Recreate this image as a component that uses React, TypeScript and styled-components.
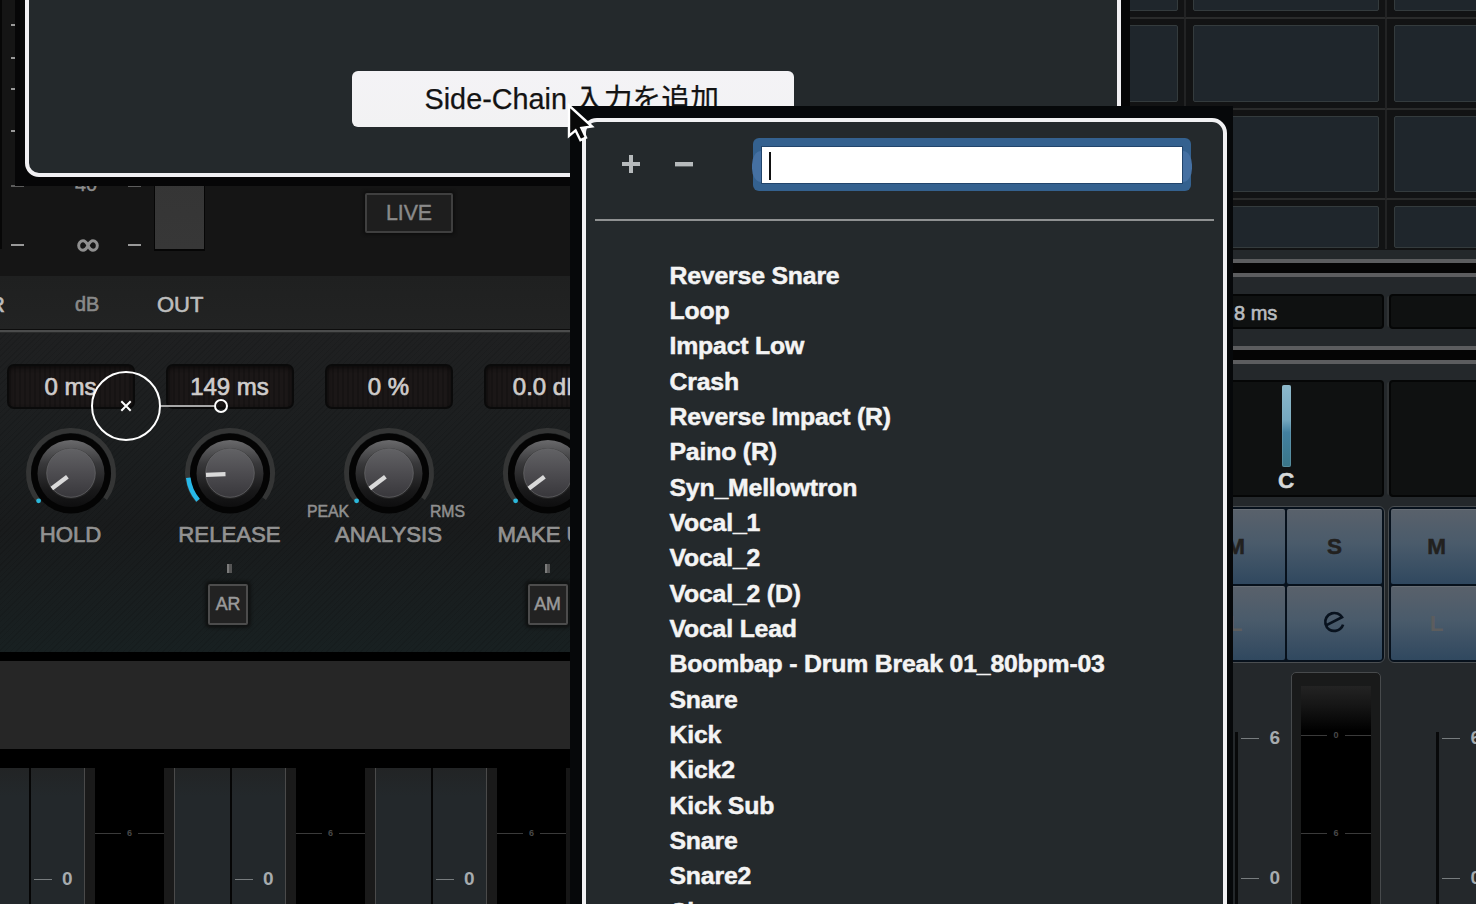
import React from "react";
import styled, { createGlobalStyle } from "styled-components";

const Global = createGlobalStyle`
  * { box-sizing: border-box; }
  html, body { margin: 0; padding: 0; background: #000; }
  body { font-family: "Liberation Sans", "Noto Sans CJK JP", sans-serif; overflow: hidden; }
`;

const Desktop = styled.div`
  position: relative;
  display: grid;
  grid-template-columns: 983px 493px;
  width: 1476px;
  height: 904px;
  overflow: hidden;
  background: #000;
`;

/* ---------- plug-in rack ---------- */

const Rack = styled.section`
  display: flex;
  flex-direction: column;
  height: 904px;
  min-width: 0;
  overflow: hidden;
  background: #000;
`;

const MeterArea = styled.div`
  display: flex;
  align-items: flex-start;
  height: 276px;
  background: #151515;
  flex: none;
`;

const MeterEdge = styled.div`
  width: 2px;
  height: 249px;
  margin-right: 9px;
  background: #070707;
`;

const TickColumn = styled.div<{ $w: number; $pull?: number }>`
  width: ${(p) => p.$w}px;
  margin-left: ${(p) => p.$pull ?? 0}px;
  flex: none;
`;

const Tick = styled.div<{ $gap: number; $w?: number; $dim?: boolean }>`
  width: ${(p) => p.$w ?? 13}px;
  height: 2px;
  margin-top: ${(p) => p.$gap}px;
  background: ${(p) => (p.$dim ? "#5c5c5c" : "#999")};
`;

const ScaleText = styled.div`
  width: 68px;
  padding-top: 174px;
  margin-left: 17px;
  text-align: left;
  color: #8c8c8c;
  font-size: 20px;
  line-height: 20px;
  -webkit-text-stroke: 0.4px currentColor;
`;

const InfinityMark = styled.svg`
  display: block;
  width: 22px;
  height: 13px;
  margin: 45px 0 0 2px;
  fill: none;
  stroke: #8f8f8f;
  stroke-width: 3;
`;

const OutMeter = styled.div`
  width: 51px;
  height: 251px;
  margin-left: 26px;
  border: 1px solid #060606;
  border-top: 0;
  border-bottom-width: 2px;
  background: linear-gradient(#303030, #373737);
`;

const LiveButton = styled.div`
  display: flex;
  align-items: center;
  justify-content: center;
  width: 88px;
  height: 40px;
  margin: 193px 0 0 160px;
  border: 2px solid #3f3f3f;
  border-radius: 2px;
  background: #1e1e1e;
  box-shadow: 0 0 3px 2px #0f0f0f;
  color: #8a8a8a;
  font-size: 21.3px;
  -webkit-text-stroke: 0.4px currentColor;
`;

const CaptionBar = styled.div`
  display: flex;
  align-items: center;
  height: 54px;
  padding-top: 4px;
  flex: none;
  background: linear-gradient(#1f2020, #222323);
  border-bottom: 1px solid #0d0d0d;
`;

const Caption = styled.span<{ $w: number; $color: string; $size: number; $pull?: number }>`
  width: ${(p) => p.$w}px;
  margin-left: ${(p) => p.$pull ?? 0}px;
  color: ${(p) => p.$color};
  font-size: ${(p) => p.$size}px;
  -webkit-text-stroke: 0.6px currentColor;
`;

const Groove = styled.div`
  height: 3px;
  flex: none;
  background: #4b4c4c;
  border-bottom: 1px solid #2a2b2b;
`;

const KnobPanel = styled.div`
  display: flex;
  height: 319px;
  padding: 31px 0 0 7px;
  flex: none;
  background:
    repeating-linear-gradient(135deg, rgba(0, 0, 0, 0.1) 0 1px, transparent 1px 4px),
    linear-gradient(#1f2021, #1b1e1f 40%, #191b1c 60%, #182021 99%);
`;

const KnobUnit = styled.div`
  display: flex;
  flex-direction: column;
  align-items: center;
  width: 127px;
  margin-right: 32px;
  flex: none;
`;

const Readout = styled.div`
  display: flex;
  align-items: center;
  justify-content: center;
  width: 128px;
  height: 45px;
  padding-top: 1px;
  flex: none;
  border: 2px solid #0a0a0a;
  border-radius: 7px;
  background:
    repeating-linear-gradient(90deg, rgba(0, 0, 0, 0.18) 0 2px, transparent 2px 5px),
    #1b1717;
  box-shadow: inset 0 2px 4px #0c0a0a;
  color: #cfcccb;
  font-size: 24px;
  white-space: nowrap;
  -webkit-text-stroke: 0.7px currentColor;
`;

const KnobArt = styled.svg`
  display: block;
  width: 100px;
  height: 100px;
  margin-top: 14px;
  flex: none;
`;

const RangeRow = styled.div`
  display: flex;
  justify-content: space-between;
  width: 158px;
  height: 18px;
  margin: -20px 5px 0 0;
  color: #8f8f8f;
  font-size: 15.8px;
  line-height: 18px;
  -webkit-text-stroke: 0.5px currentColor;
`;

const KnobName = styled.div`
  margin-top: 2px;
  height: 25px;
  color: #929292;
  font-size: 22.2px;
  line-height: 24px;
  white-space: nowrap;
  -webkit-text-stroke: 0.7px currentColor;
`;

const Pip = styled.div`
  width: 5px;
  height: 9px;
  margin-top: 16px;
  background: linear-gradient(90deg, #7b7b7b 40%, #555 40%);
`;

const AutoButton = styled.div<{ $nudge: number }>`
  display: flex;
  align-items: center;
  justify-content: center;
  width: 40px;
  height: 41px;
  margin: 11px ${(p) => p.$nudge}px 0 0;
  border: 2px solid #4c4c4c;
  border-radius: 2px;
  background: #222;
  box-shadow: 0 0 3px 3px #101212;
  color: #9a9a9a;
  font-size: 17.8px;
  -webkit-text-stroke: 0.5px currentColor;
`;

const GreyBand = styled.div`
  height: 88px;
  margin: 9px 0 19px;
  flex: none;
  background: #262626;
`;

const LowerStrips = styled.div`
  display: flex;
  height: 136px;
  margin-left: -37px;
  flex: none;
`;

const FaderStrip = styled.div`
  display: grid;
  grid-template-columns: 11px 55px 55px 11px 69px;
  width: 201px;
  flex: none;
`;

const Rail = styled.div<{ $side: "left" | "right" }>`
  background: #1a1a1a;
  border-${(p) => (p.$side === "left" ? "right" : "left")}: 1px solid #4a4a4a;
`;

const RailEnd = styled.div`
  width: 10px;
  background: #161616;
`;

const Plate = styled.div<{ $slot?: boolean }>`
  background: linear-gradient(#222425, #23282b 28px);
  border-left: ${(p) => (p.$slot ? "2px solid #050505" : "0")};
`;

const ScaleMark = styled.div<{ $top: number; $pad: number }>`
  display: flex;
  align-items: center;
  height: 22px;
  margin-top: ${(p) => p.$top}px;
  padding-left: ${(p) => p.$pad}px;
  gap: 10.5px;
  color: #a6abae;
  font-size: 19px;
  font-weight: bold;
  &::before {
    content: "";
    width: 18px;
    height: 1.5px;
    margin-top: 1px;
    background: #777c7e;
  }
`;

const MeterLine = styled.div<{ $top: number }>`
  display: flex;
  align-items: center;
  justify-content: space-between;
  height: 12px;
  margin-top: ${(p) => p.$top}px;
  color: #484848;
  font-size: 9px;
  font-weight: bold;
  &::before,
  &::after {
    content: "";
    width: 26px;
    height: 1.5px;
    margin-top: 1px;
    background: #3a3a3a;
  }
`;

/* ---------- mixer ---------- */

const Mixer = styled.section`
  display: flex;
  flex-direction: column;
  height: 904px;
  overflow: hidden;
  background: #24282b;
`;

const SlotGrid = styled.div`
  display: grid;
  grid-template-columns: repeat(3, 201px);
  grid-template-rows: 19px 90.5px 90.5px 49px;
  height: 250px;
  flex: none;
  background: #121314;
`;

const SlotCell = styled.div<{ $last?: boolean }>`
  display: flex;
  padding: 6px 6px 6px 7px;
  ${(p) => p.$last && "padding-bottom: 1px;"}
  border-left: 2px solid #222324;
  border-bottom: ${(p) => (p.$last ? "0" : "2px solid #2a2b2b")};
`;

const SlotPlate = styled.div<{ $first?: boolean }>`
  flex: 1;
  margin-top: ${(p) => (p.$first ? "-20px" : "0")};
  border: 1px solid #343b3d;
  border-radius: 2px;
  background: #1f262c;
`;

const Divider = styled.div<{ $gap: number }>`
  height: 18px;
  margin-top: ${(p) => p.$gap}px;
  flex: none;
  border: solid #5c5d5f;
  border-width: 4.5px 0;
  background: #050505;
`;

const StripRow = styled.div<{ $h: number; $gap: number }>`
  display: flex;
  height: ${(p) => p.$h}px;
  margin-top: ${(p) => p.$gap}px;
  flex: none;
`;

const Well = styled.div`
  width: 196px;
  margin: 0 1px 0 4px;
  flex: none;
  border: 2px solid #050606;
  border-radius: 4px;
  background: #0f1111;
  box-shadow: -4px 0 0 -2px #303335;
`;

const LatencyText = styled.div`
  padding: 6px 0 0 44px;
  color: #b9bdc0;
  font-size: 20px;
  line-height: 23px;
  -webkit-text-stroke: 0.6px currentColor;
`;

const PanBlock = styled.div`
  display: flex;
  flex-direction: column;
  align-items: center;
  padding-top: 3px;
  color: #d5d8d9;
  font-size: 22.5px;
  font-weight: bold;
  line-height: 24px;
  -webkit-text-stroke: 0.5px currentColor;
  &::before {
    content: "";
    width: 9px;
    height: 82px;
    margin-bottom: 2px;
    border-radius: 2px;
    background: linear-gradient(#8cb8cb, #76a8bf 42%, #4280a0 58%, #3a7688);
    box-shadow: inset 0 0 0 1px rgba(150, 190, 200, 0.3);
  }
`;

const ButtonBlock = styled.div`
  display: grid;
  grid-template-columns: 1fr 1fr;
  gap: 2px;
  width: 198px;
  height: 157px;
  margin: 0 0 0 3px;
  padding: 2px;
  flex: none;
  border: 1px solid #4a4e51;
  border-radius: 6px;
  background: #07111c;
`;

const ChannelButton = styled.div<{ $dim?: boolean; $left?: boolean }>`
  display: flex;
  align-items: center;
  justify-content: center;
  padding-top: 1px;
  padding-right: ${(p) => (p.$left ? 4 : 0)}px;
  border-radius: 2px;
  background: linear-gradient(#59616b, #4a5b6b 45%, #30485f);
  border-top: 1px solid #686e75;
  color: ${(p) => (p.$dim ? "#5c5d5e" : "#22211f")};
  font-size: 22.5px;
  font-weight: bold;
  -webkit-text-stroke: ${(p) => (p.$dim ? 0 : 0.5)}px currentColor;
`;

const EditGlyph = styled.svg`
  display: block;
  width: 22px;
  height: 22px;
  margin: -4px 1px 0 0;
  fill: none;
  stroke: #08121e;
  stroke-width: 2.7;
`;

const MixerFaders = styled.div`
  display: flex;
  height: 241px;
  flex: none;
`;

const MixerFader = styled.div`
  display: flex;
  width: 201px;
  flex: none;
`;

const FaderScale = styled.div`
  width: 56px;
  margin: 69px 0 0 51px;
  border-left: 3px solid #08090a;
  flex: none;
`;

const LevelMeter = styled.div`
  width: 90px;
  height: 260px;
  margin-top: 9px;
  padding: 13px 9px 0;
  flex: none;
  border: 1px solid #474a4c;
  border-radius: 5px;
  background: #191a1a;
`;

const LevelWell = styled.div`
  height: 240px;
  background: linear-gradient(#232323, #151515 20px, #000 45px);
  overflow: hidden;
`;

/* ---------- floating windows ---------- */

const SideChainWindow = styled.div`
  position: absolute;
  left: 15px;
  top: -40px;
  width: 1115px;
  height: 226px;
  padding: 0 9.5px 9px 10px;
  background: #060607;
`;

const SideChainBody = styled.div`
  display: flex;
  justify-content: center;
  height: 100%;
  padding-top: 107px;
  border: 4.3px solid #f1f0f3;
  border-radius: 14px;
  background: #24292c;
`;

const AddInputButton = styled.div`
  display: flex;
  align-items: center;
  justify-content: center;
  width: 442px;
  height: 56px;
  padding: 0 2px 6px 0;
  border-radius: 6px;
  background: linear-gradient(#f4f3f6, #f2f2f3);
  color: #131313;
  font-size: 28.8px;
  -webkit-text-stroke: 0.25px currentColor;
  white-space: nowrap;
`;

const PopupWindow = styled.div`
  position: absolute;
  left: 570px;
  top: 106px;
  width: 663px;
  height: 860px;
  padding: 12px 6.5px 0 11.5px;
  background: #06080a;
`;

const PopupBody = styled.div`
  height: 100%;
  border: 4.3px solid #f1f1f3;
  border-radius: 15px;
  background: #24292c;
`;

const PopupHeader = styled.div`
  display: flex;
  height: 97px;
  padding: 16px 0 0 36px;
`;

const SignGlyph = styled.svg`
  display: block;
  width: 18px;
  height: 18px;
  margin: 17px 35px 0 0;
  fill: #b6babc;
`;

const SearchRing = styled.div`
  position: relative;
  width: 438px;
  height: 53px;
  margin-left: 25px;
  padding: 8px;
  border-radius: 6px;
  background: #34618f;
  &::before,
  &::after {
    content: "";
    position: absolute;
    top: 13px;
    width: 9px;
    height: 31px;
    background: #4570a2;
  }
  &::before { left: -1px; border-radius: 10px 0 0 10px / 15px 0 0 15px; }
  &::after { right: -1px; border-radius: 0 10px 10px 0 / 0 15px 15px 0; }
`;

const SearchField = styled.div`
  display: flex;
  align-items: center;
  height: 38px;
  padding-left: 7px;
  border: 1px solid #22456c;
  background: #fff;
  &::before {
    content: "";
    width: 2px;
    height: 28px;
    margin-top: 1px;
    background: #111;
  }
`;

const Rule = styled.div`
  height: 2px;
  margin: 0 9px;
  background: #8f9192;
`;

const TrackList = styled.div`
  padding: 36.6px 0 0 84px;
`;

const TrackItem = styled.div`
  height: 35.35px;
  color: #f4f4f4;
  font-size: 24.8px;
  font-weight: bold;
  letter-spacing: -0.18px;
  line-height: 35.35px;
  white-space: nowrap;
  -webkit-text-stroke: 0.5px currentColor;
`;

const OverlayArt = styled.svg`
  position: absolute;
  left: 88px;
  top: 368px;
`;

const PointerArt = styled.svg`
  position: absolute;
  left: 564px;
  top: 98px;
`;

const tracks = [
  "Reverse Snare", "Loop", "Impact Low", "Crash", "Reverse Impact (R)", "Paino (R)",
  "Syn_Mellowtron", "Vocal_1", "Vocal_2", "Vocal_2 (D)", "Vocal Lead",
  "Boombap - Drum Break 01_80bpm-03", "Snare", "Kick", "Kick2", "Kick Sub",
  "Snare", "Snare2", "Clap",
];

const point = (deg: number, r: number) => {
  const a = (deg * Math.PI) / 180;
  return `${(50 + r * Math.cos(a)).toFixed(2)} ${(50 + r * Math.sin(a)).toFixed(2)}`;
};

function Knob({ angle, dot }: { angle: number; dot?: boolean }) {
  return (
    <KnobArt viewBox="0 0 100 100">
      <defs>
        <linearGradient id="knobRim" x1="0" y1="0" x2="0" y2="1">
          <stop offset="0" stopColor="#6a6a6c" />
          <stop offset="0.35" stopColor="#39393b" />
          <stop offset="0.75" stopColor="#19191a" />
          <stop offset="1" stopColor="#0e0e0f" />
        </linearGradient>
        <linearGradient id="knobCap" x1="0" y1="0" x2="0" y2="1">
          <stop offset="0" stopColor="#626265" />
          <stop offset="0.5" stopColor="#4d4c50" />
          <stop offset="1" stopColor="#38373b" />
        </linearGradient>
      </defs>
      <path d={`M${point(139, 42.5)} A42.5 42.5 0 1 1 ${point(37, 42.5)}`} fill="none" stroke="#343535" strokeWidth="5" />
      <circle cx="50" cy="50.5" r="40" fill="#040404" />
      <circle cx="50" cy="50.5" r="33.5" fill="url(#knobRim)" />
      <circle cx="50" cy="50.5" r="25.5" fill="#2b2b2c" opacity="0.6" />
      <circle cx="50" cy="50" r="24.3" fill="url(#knobCap)" stroke="#69696c" strokeWidth="0.7" />
      <path d={`M${point(angle, 4.5)} L${point(angle, 24)}`} transform="translate(0 1)" stroke="#dadada" strokeWidth="4.4" />
      {dot ? (
        <circle cx="17.6" cy="77.8" r="2.4" fill="#2bb9dc" />
      ) : (
        <path d={`M${point(139.5, 42)} A42 42 0 0 1 ${point(173.5, 42)}`} fill="none" stroke="#27b8e8" strokeWidth="4.6" />
      )}
    </KnobArt>
  );
}

const knobs = [
  { value: "0 ms", name: "HOLD", angle: 143 },
  { value: "149 ms", name: "RELEASE", angle: 178, button: "AR", nudge: 3 },
  { value: "0 %", name: "ANALYSIS", angle: 143, range: ["PEAK", "RMS"] },
  { value: "0.0 dB", name: "MAKE UP", angle: 143, button: "AM", nudge: 0 },
];

export default function App() {
  return (
    <>
      <Global />
      <Desktop>
        <Rack>
          <MeterArea>
            <MeterEdge />
            <TickColumn $w={47}>
              <Tick $gap={24} $w={4} />
              <Tick $gap={31} $w={4} />
              <Tick $gap={29} $w={4} />
              <Tick $gap={40} $w={4} />
              <Tick $gap={53} $dim />
              <Tick $gap={57} />
            </TickColumn>
            <ScaleText>
              40
              <InfinityMark viewBox="0 0 22 13">
                <path d="M11 6.5 C9.4 3.2 8 1.8 6 1.8 A4.3 4.7 0 0 0 6 11.2 C8 11.2 9.4 9.8 11 6.5 C12.6 3.2 14 1.8 16 1.8 A4.3 4.7 0 0 1 16 11.2 C14 11.2 12.6 9.8 11 6.5 Z" />
              </InfinityMark>
            </ScaleText>
            <TickColumn $w={0} $pull={-15}>
              <Tick $gap={185} $dim />
              <Tick $gap={57} />
            </TickColumn>
            <OutMeter />
            <LiveButton>LIVE</LiveButton>
          </MeterArea>
          <CaptionBar>
            <Caption $w={86} $pull={-11} $color="#bdbdbd" $size={22}>R</Caption>
            <Caption $w={82} $color="#8a8a8a" $size={19.8}>dB</Caption>
            <Caption $w={60} $color="#bdbdbd" $size={22}>OUT</Caption>
          </CaptionBar>
          <Groove />
          <KnobPanel>
            {knobs.map((k) => (
              <KnobUnit key={k.name}>
                <Readout>{k.value}</Readout>
                <Knob angle={k.angle} dot={k.angle === 143} />
                <RangeRow>
                  {k.range?.map((r) => <span key={r}>{r}</span>)}
                </RangeRow>
                <KnobName>{k.name}</KnobName>
                {k.button && <Pip />}
                {k.button && <AutoButton $nudge={k.nudge ?? 0}>{k.button}</AutoButton>}
              </KnobUnit>
            ))}
          </KnobPanel>
          <GreyBand />
          <LowerStrips>
            {[0, 1, 2].map((i) => (
              <FaderStrip key={i}>
                <Rail $side="left" />
                <Plate />
                <Plate $slot>
                  <ScaleMark $top={100} $pad={2.5}>0</ScaleMark>
                </Plate>
                <Rail $side="right" />
                <MeterLine $top={59}>6</MeterLine>
              </FaderStrip>
            ))}
            <RailEnd />
          </LowerStrips>
        </Rack>

        <Mixer>
          <SlotGrid>
            {Array.from({ length: 12 }, (_, i) => (
              <SlotCell key={i} $last={i > 8}>
                <SlotPlate $first={i < 3} />
              </SlotCell>
            ))}
          </SlotGrid>
          <Divider $gap={9} />
          <StripRow $h={35} $gap={17} >
            <Well />
            <Well><LatencyText>8 ms</LatencyText></Well>
            <Well />
          </StripRow>
          <Divider $gap={17} />
          <StripRow $h={117} $gap={16}>
            <Well />
            <Well><PanBlock>C</PanBlock></Well>
            <Well />
          </StripRow>
          <StripRow $h={157} $gap={9}>
            {[0, 1, 2].map((i) => (
              <ButtonBlock key={i}>
                <ChannelButton $left>M</ChannelButton>
                <ChannelButton>S</ChannelButton>
                <ChannelButton $dim $left>L</ChannelButton>
                <ChannelButton>
                  <EditGlyph viewBox="0 0 22 22">
                    <path d="M2.6 14.6 L19 6.2 C17 2.8 12.6 1.2 8.7 2.4 C4 3.8 1.4 8.5 2.5 13 C3.7 18 8 20.6 12.6 19.8 C16 19.2 18.9 17 20.1 13.6" />
                  </EditGlyph>
                </ChannelButton>
              </ButtonBlock>
            ))}
          </StripRow>
          <MixerFaders>
            {[0, 1, 2].map((i) => (
              <MixerFader key={i}>
                <FaderScale>
                  <ScaleMark $top={-5} $pad={3}>6</ScaleMark>
                  <ScaleMark $top={118} $pad={3}>0</ScaleMark>
                </FaderScale>
                <LevelMeter>
                  <LevelWell>
                    <MeterLine $top={43}>0</MeterLine>
                    <MeterLine $top={86}>6</MeterLine>
                  </LevelWell>
                </LevelMeter>
              </MixerFader>
            ))}
          </MixerFaders>
        </Mixer>

        <OverlayArt width="144" height="76" viewBox="88 368 144 76" fill="none" stroke="#fff" strokeWidth="2">
          <circle cx="126" cy="406" r="34" />
          <path d="M121.3 401.3 L130.7 410.7 M130.7 401.3 L121.3 410.7" />
          <path d="M161 406 H214" stroke="#a6a6a6" />
          <circle cx="221" cy="406" r="6" />
        </OverlayArt>

        <SideChainWindow>
          <SideChainBody>
            <AddInputButton>Side-Chain 入力を追加</AddInputButton>
          </SideChainBody>
        </SideChainWindow>

        <PopupWindow>
          <PopupBody>
            <PopupHeader>
              <SignGlyph viewBox="0 0 18 18"><path d="M7 0h4v7h7v4h-7v7H7v-7H0V7h7z" /></SignGlyph>
              <SignGlyph viewBox="0 0 18 18"><path d="M0 7h18v4.4H0z" /></SignGlyph>
              <SearchRing><SearchField /></SearchRing>
            </PopupHeader>
            <Rule />
            <TrackList>
              {tracks.map((t, i) => <TrackItem key={i}>{t}</TrackItem>)}
            </TrackList>
          </PopupBody>
        </PopupWindow>

        <PointerArt width="36" height="48" viewBox="564 98 36 48">
          <path
            d="M569 105.5 V136 L575.6 130.4 L580.4 140.2 L586 137.6 L581.4 128 L592 126.5 Z"
            fill="#080808" stroke="#fff" strokeWidth="2.4" strokeLinejoin="miter"
          />
        </PointerArt>
      </Desktop>
    </>
  );
}
